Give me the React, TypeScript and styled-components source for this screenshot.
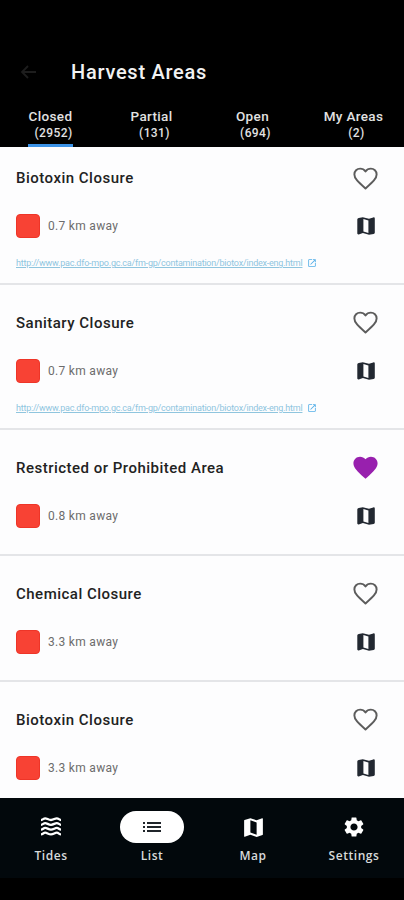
import React from 'react';
import styled, { createGlobalStyle } from 'styled-components';
import { MdFavorite, MdList, MdMap, MdOpenInNew, MdSettings } from 'react-icons/md';

const GlobalStyle = createGlobalStyle`
  * { box-sizing: border-box; }
  body { margin: 0; background: #000; font-family: Roboto, sans-serif; }
`;

const Screen = styled.div`
  display: flex;
  flex-direction: column;
  height: 900px;
  width: 100%;
  overflow: hidden;
  background: #000;
`;

const Header = styled.header`
  height: 147px;
  flex: none;
  display: flex;
  flex-direction: column;
  padding-top: 52px;
`;

const TitleBar = styled.div`
  display: flex;
  align-items: center;
  height: 40px;
  padding-left: 20px;
  gap: 35px;
`;

const BackIcon = styled.svg`
  width: 16px;
  height: 14px;
  fill: none;
  stroke: #1d1d1d;
  stroke-width: 1.8;
`;

const ScreenTitle = styled.h1`
  margin: 0;
  font-size: 20px;
  line-height: 24px;
  font-weight: 500;
  letter-spacing: 0.73px;
  color: #f2f2f2;
`;

const Tabs = styled.div`
  flex: 1;
  display: grid;
  grid-template-columns: repeat(4, 101px);
`;

const Tab = styled.div<{ $active?: boolean }>`
  justify-self: center;
  padding-top: 15px;
  border-bottom: 3px solid ${(p) => (p.$active ? '#3b92e6' : 'transparent')};
  font-size: 13.5px;
  line-height: 18px;
  font-weight: 500;
  letter-spacing: 0.35px;
  text-align: center;
  white-space: nowrap;
  color: #e2e2e2;
`;

const Count = styled.span`
  display: block;
  padding-left: 6px;
  font-size: 12px;
  line-height: 16px;
  letter-spacing: 0.4px;
`;

const List = styled.main`
  height: 651px;
  flex: none;
  overflow: hidden;
  background: #fdfdfe;
`;

const Entry = styled.article<{ $linked?: boolean }>`
  height: ${(p) => (p.$linked ? 144.7 : 126)}px;
  padding: 22px 22.5px 0 16px;
  border-bottom: 2px solid #e4e5e8;
  &:first-child { margin-top: -6.8px; }
`;

const Line = styled.div`
  display: flex;
  align-items: center;
  justify-content: space-between;
  height: 32px;
  & + & { margin-top: 16px; }
`;

const AreaName = styled.h2`
  margin: 0;
  font-size: 15px;
  font-weight: 500;
  letter-spacing: 0.49px;
  color: #222;
`;

const Distance = styled.div`
  display: flex;
  align-items: center;
  gap: 8px;
  font-size: 12px;
  letter-spacing: 0.3px;
  color: #6c6c6c;
`;

const Swatch = styled.span`
  width: 24px;
  height: 24px;
  border-radius: 4px;
  background: #f84234;
  border: 1px solid #ee3528;
`;

const IconSlot = styled.span<{ $color: string }>`
  width: 32px;
  display: flex;
  justify-content: center;
  color: ${(p) => p.$color};
`;

const SourceLink = styled.a`
  display: flex;
  align-items: center;
  gap: 5px;
  margin-top: 12px;
  height: 18px;
  font-size: 9px;
  white-space: nowrap;
  color: #8fc5de;
  span { text-decoration: underline; letter-spacing: -0.22px; }
  svg { color: #53aee8; }
`;

const NavBar = styled.nav`
  height: 80px;
  flex: none;
  display: grid;
  grid-template-columns: repeat(4, 101px);
  padding-left: 0.5px;
  background: #02080c;
`;

const NavItem = styled.div`
  display: flex;
  flex-direction: column;
  align-items: center;
  padding-top: 13px;
  color: #fff;
`;

const NavIcon = styled.span<{ $active?: boolean }>`
  width: 64px;
  height: 32px;
  border-radius: 16px;
  display: flex;
  align-items: center;
  justify-content: center;
  background: ${(p) => (p.$active ? '#fff' : 'transparent')};
  color: ${(p) => (p.$active ? '#20252a' : '#fff')};
`;

const NavLabel = styled.span`
  margin-top: 5px;
  font-family: 'Open Sans', sans-serif;
  font-size: 12px;
  line-height: 16px;
  font-weight: 600;
  letter-spacing: 0.55px;
  color: #d8dadb;
`;

const TidesIcon = () => (
  <svg width="22" height="20" viewBox="0 0 22 20" fill="none" stroke="currentColor" strokeWidth="2.3">
    {[3, 7.8, 12.6, 17.4].map((y) => (
      <path key={y} d={`M1 ${y}C3 ${y} 3.4 ${y - 1.7} 5.2 ${y - 1.7}S8.5 ${y} 11 ${y}S14.8 ${y - 1.7} 16.8 ${y - 1.7}S19 ${y} 21 ${y}`} />
    ))}
  </svg>
);

const HeartOutline = () => (
  <svg width="29" height="29" viewBox="0 0 24 24" fill="none" stroke="currentColor" strokeWidth="1.6" strokeLinejoin="round">
    <path d="M12 20.3C6.2 15.1 2.8 12.2 2.8 8.6 2.8 5.9 4.9 3.8 7.6 3.8c1.7 0 3.4.9 4.4 2.3 1-1.4 2.7-2.3 4.4-2.3 2.7 0 4.8 2.1 4.8 4.8 0 3.6-3.4 6.5-9.2 11.7z" />
  </svg>
);

const FoldedMap = () => (
  <svg width="18" height="18" viewBox="0 0 18 18" fill="currentColor">
    <path
      fillRule="evenodd"
      d="M.3 2.6C.3 1.8 1 1.4 1.7 1.1L5.8.2l6.2 1.6L16.3.4c.8-.2 1.5.3 1.5 1.1v13.9c0 .8-.5 1.3-1.2 1.5L12 17.8l-6.1-1.7-4.2 1.3c-.8.2-1.4-.3-1.4-1.1zM6.4 2.1v12.4l5 1.4V3.4z"
    />
  </svg>
);

const tabs = [
  { label: 'Closed', count: '(2952)', active: true },
  { label: 'Partial', count: '(131)' },
  { label: 'Open', count: '(694)' },
  { label: 'My Areas', count: '(2)' },
];

const url = 'http://www.pac.dfo-mpo.gc.ca/fm-gp/contamination/biotox/index-eng.html';

const areas = [
  { name: 'Biotoxin Closure', distance: '0.7 km away', link: url },
  { name: 'Sanitary Closure', distance: '0.7 km away', link: url },
  { name: 'Restricted or Prohibited Area', distance: '0.8 km away', favorite: true },
  { name: 'Chemical Closure', distance: '3.3 km away' },
  { name: 'Biotoxin Closure', distance: '3.3 km away' },
];

const navItems = [
  { label: 'Tides', icon: <TidesIcon /> },
  { label: 'List', icon: <MdList size={24} />, active: true },
  { label: 'Map', icon: <MdMap size={25} /> },
  { label: 'Settings', icon: <MdSettings size={24} /> },
];

export default function App() {
  return (
    <Screen>
      <GlobalStyle />
      <Header>
        <TitleBar>
          <BackIcon viewBox="0 0 16 14">
            <path d="M16 7H2M8 1L2 7l6 6" />
          </BackIcon>
          <ScreenTitle>Harvest Areas</ScreenTitle>
        </TitleBar>
        <Tabs>
          {tabs.map((t) => (
            <Tab key={t.label} $active={t.active}>
              {t.label}
              <Count>{t.count}</Count>
            </Tab>
          ))}
        </Tabs>
      </Header>
      <List>
        {areas.map((a, i) => (
          <Entry key={i} $linked={!!a.link}>
            <Line>
              <AreaName>{a.name}</AreaName>
              <IconSlot $color={a.favorite ? '#9820ae' : '#5c5c5c'}>
                {a.favorite ? <MdFavorite size={29} /> : <HeartOutline />}
              </IconSlot>
            </Line>
            <Line>
              <Distance>
                <Swatch />
                {a.distance}
              </Distance>
              <IconSlot $color="#222831">
                <FoldedMap />
              </IconSlot>
            </Line>
            {a.link && (
              <SourceLink>
                <span>{a.link}</span>
                <MdOpenInNew size={10} />
              </SourceLink>
            )}
          </Entry>
        ))}
      </List>
      <NavBar>
        {navItems.map((n) => (
          <NavItem key={n.label}>
            <NavIcon $active={n.active}>{n.icon}</NavIcon>
            <NavLabel>{n.label}</NavLabel>
          </NavItem>
        ))}
      </NavBar>
    </Screen>
  );
}
